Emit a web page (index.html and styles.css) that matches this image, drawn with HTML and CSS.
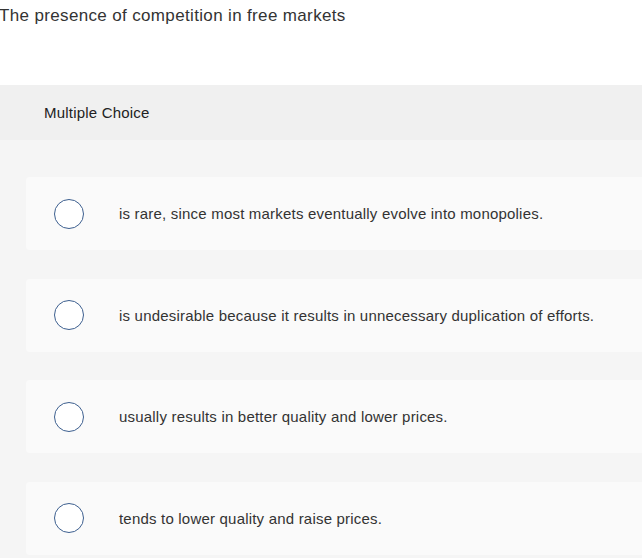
FILE: index.html
```html
<!DOCTYPE html>
<html>
<head>
<meta charset="utf-8">
<link rel="stylesheet" href="styles.css">
</head>
<body>
<div class="question">The presence of competition in free markets</div>
<div class="band">Multiple Choice</div>
<div class="choices">
  <div class="card"><span class="radio"></span><span class="label">is rare, since most markets eventually evolve into monopolies.</span></div>
  <div class="card"><span class="radio"></span><span class="label">is undesirable because it results in unnecessary duplication of efforts.</span></div>
  <div class="card"><span class="radio"></span><span class="label">usually results in better quality and lower prices.</span></div>
  <div class="card"><span class="radio"></span><span class="label">tends to lower quality and raise prices.</span></div>
</div>
</body>
</html>
```
FILE: styles.css
```css
html, body {
  margin: 0;
  padding: 0;
  background: #ffffff;
  width: 642px;
  height: 558px;
  overflow: hidden;
}
body {
  font-family: "Liberation Sans", Arial, sans-serif;
  color: #333333;
}
.question {
  font-size: 17px;
  letter-spacing: 0.35px;
  line-height: 20px;
  padding-top: 6px;
  margin-left: -1px;
  height: 80px;
  box-sizing: border-box;
  color: #333;
}
.band {
  margin-top: 5px;
  height: 55px;
  background: #f0f0f0;
  font-size: 15px;
  letter-spacing: 0.2px;
  line-height: 55px;
  padding-left: 44px;
  color: #222;
}
.choices {
  background: #f5f5f5;
  padding: 37px 0 0 26px;
  display: flex;
  flex-direction: column;
  gap: 28.5px;
  height: 418px;
  box-sizing: border-box;
}
.card {
  height: 73px;
  background: #fafafa;
  border-radius: 4px 0 0 4px;
  display: flex;
  align-items: center;
  flex-shrink: 0;
}
.radio {
  width: 28px;
  height: 28px;
  border: 1.5px solid #3d5f8f;
  border-radius: 50%;
  background: #fff;
  margin-left: 28px;
  flex-shrink: 0;
}
.label {
  margin-left: 35px;
  font-size: 15px;
  letter-spacing: 0.2px;
  color: #333;
}
```
